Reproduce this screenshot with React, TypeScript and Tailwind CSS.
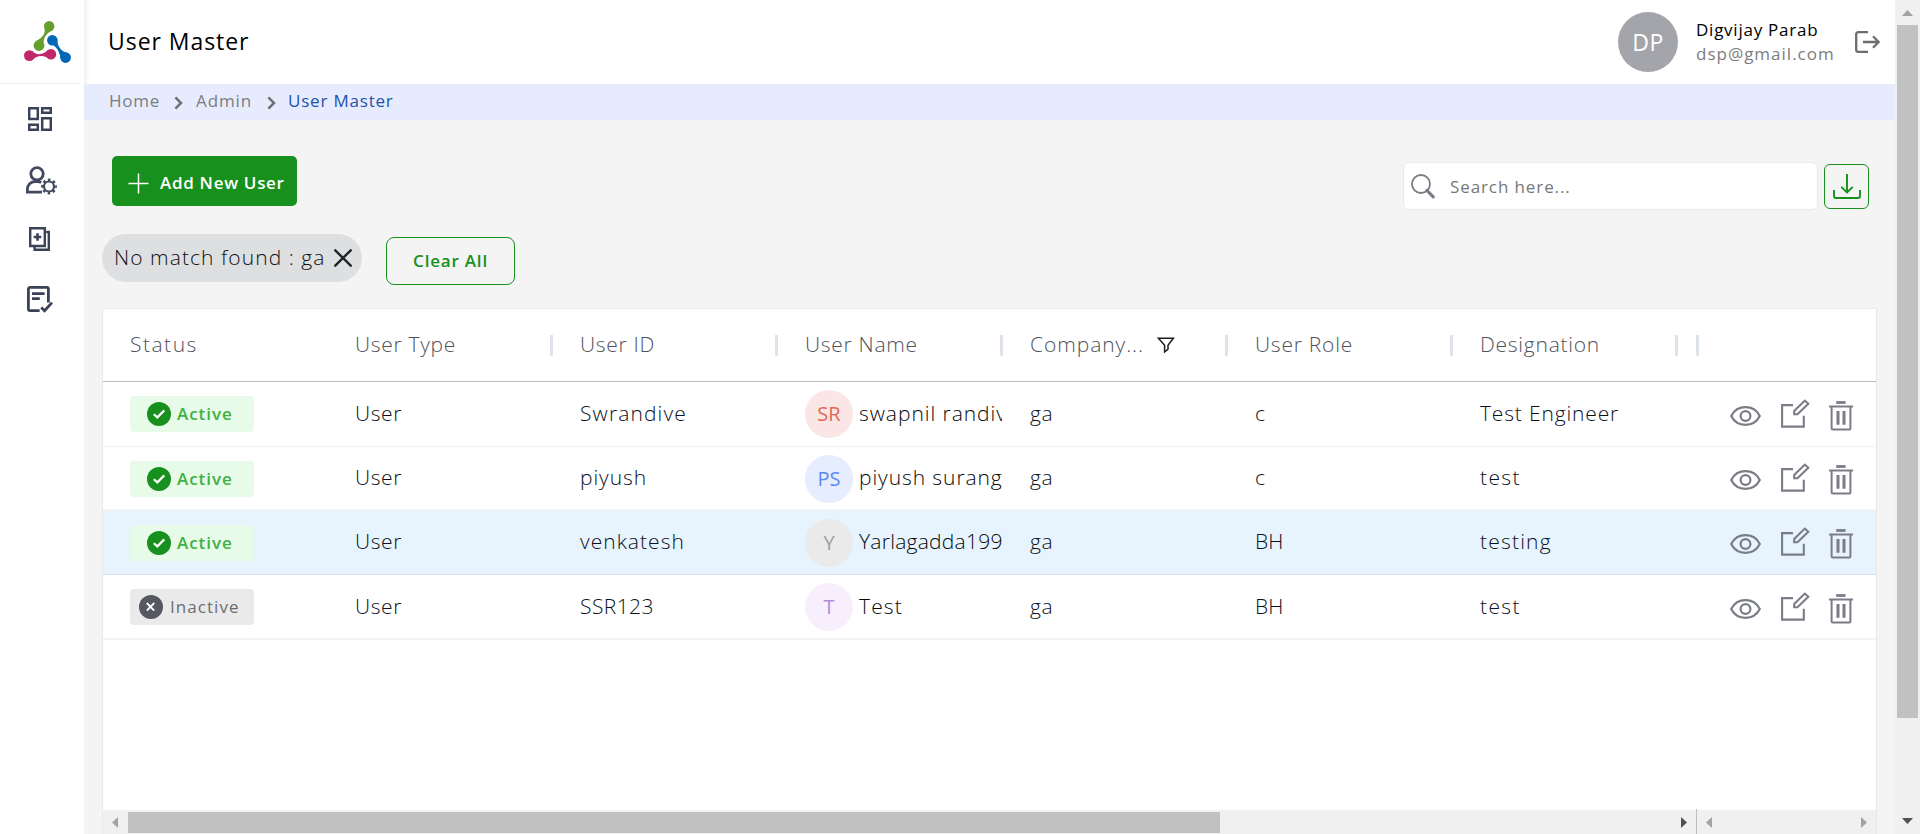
import React from "react";

type Row = {
  active: boolean;
  id: string;
  idLs: string;
  initials: string;
  avatar: string;
  name: string;
  nameLs: string;
  role: string;
  designation: string;
  desLs: string;
  line: string;
};

const rows: Row[] = [
  { active: true, id: "Swrandive", idLs: "tracking-[1.13px]", initials: "SR", avatar: "bg-[#fae7e5] text-[#e56656]", name: "swapnil randive", nameLs: "tracking-[0.95px]", role: "c", designation: "Test Engineer", desLs: "tracking-[0.84px]", line: "h-[65px] border-b border-[#f1f1f2]" },
  { active: true, id: "piyush", idLs: "tracking-[0.93px]", initials: "PS", avatar: "bg-[#e6edfe] text-[#5c88f5]", name: "piyush surang", nameLs: "tracking-[0.92px]", role: "c", designation: "test", desLs: "tracking-[1.4px]", line: "h-16 border-b-2 border-[#f3f3f3] pt-px" },
  { active: true, id: "venkatesh", idLs: "tracking-[1.03px]", initials: "Y", avatar: "bg-[#eaeaea] text-[#9b9da3]", name: "Yarlagadda199", nameLs: "tracking-[0.25px]", role: "BH", designation: "testing", desLs: "tracking-[1.2px]", line: "h-16 border-b border-[#d5dfe9] bg-[#e7f4fe]" },
  { active: false, id: "SSR123", idLs: "tracking-[0.43px]", initials: "T", avatar: "bg-[#f7effe] text-[#b48bd6]", name: "Test", nameLs: "tracking-[1.15px]", role: "BH", designation: "test", desLs: "tracking-[1.4px]", line: "h-[65px] border-b-2 border-[#f3f3f3] pt-px" },
];

const headers: { label: string; ls: string; bar?: boolean; filter?: boolean }[] = [
  { label: "Status", ls: "tracking-[1.5px]" },
  { label: "User Type", ls: "tracking-[0.7px]", bar: true },
  { label: "User ID", ls: "tracking-[0.7px]", bar: true },
  { label: "User Name", ls: "tracking-[0.7px]", bar: true },
  { label: "Company...", ls: "tracking-[0.94px]", bar: true, filter: true },
  { label: "User Role", ls: "tracking-[0.76px]", bar: true },
  { label: "Designation", ls: "tracking-[0.74px]", bar: true },
];

function Logo() {
  return (
    <svg width="47" height="43" viewBox="0 0 47 43">
      <g fill="#65a02f">
        <circle cx="25.2" cy="5.2" r="5.2" />
        <circle cx="15" cy="24.5" r="5.4" />
        <path d="M20.3 7 C21.8 12 19.5 16 11.5 20.5 L19.8 27 C18.4 18 21.5 12.5 28.5 9.2Z" />
      </g>
      <g fill="#0367b6">
        <circle cx="28.3" cy="19.2" r="5.2" />
        <circle cx="41.6" cy="36.6" r="5.3" />
        <path d="M24.5 22.8 C30.5 23.5 35.5 28.5 36.5 37.5 L44.5 32.2 C37.5 31 33.2 26 33.2 17.5Z" />
      </g>
      <g fill="#c0286b">
        <circle cx="5.4" cy="34.6" r="5.4" />
        <circle cx="27" cy="33.2" r="5.2" />
        <path d="M8 30 C12.5 34.6 19 34.2 24.5 28.6 L25 38 C20 33.8 13.5 34 7.5 39.6Z" />
      </g>
    </svg>
  );
}

function DashboardIcon() {
  return (
    <svg width="24" height="24" viewBox="0 0 24 24" fill="none" stroke="#3a4257" strokeWidth="2.5">
      <path d="M1.2 1.2h8.6v10.8H1.2zM14.2 1.2h8.6v4.6h-8.6zM14.2 11.2h8.6v11.6h-8.6zM1.2 17.8h8.6v5H1.2z" />
    </svg>
  );
}

function UserGearIcon() {
  return (
    <svg width="31" height="29" viewBox="0 0 31 29" fill="none" stroke="#414a60" strokeWidth="2.8">
      <circle cx="11" cy="7.8" r="6.2" />
      <path d="M16 26.1H1.4V23.5C1.4 18.5 4.8 15.7 9 15.7H11.5C13 15.7 14.2 16 15.2 16.6" />
      <circle cx="23" cy="20.5" r="5" strokeWidth="2.2" />
      <circle cx="23" cy="20.5" r="6.7" strokeWidth="2.4" strokeDasharray="2.6 2.662" strokeDashoffset="1.3" />
    </svg>
  );
}

function CopyIcon() {
  return (
    <svg width="21" height="24" viewBox="0 0 21 24" fill="none" stroke="#3a4257" strokeWidth="2.4">
      <path d="M1.2 1.2h14.6v17.8H1.2z" />
      <path d="M17.2 5h2.6v17.8H5.6v-3" />
      <path d="M8.5 6.2v7.6M4.7 10h7.6" strokeWidth="2.6" />
    </svg>
  );
}

function NoteIcon() {
  return (
    <svg width="26" height="27" viewBox="0 0 26 27" fill="none" stroke="#3a4257" strokeWidth="2.8">
      <path d="M12.6 24.7H3a1.6 1.6 0 0 1-1.6-1.6V3a1.6 1.6 0 0 1 1.6-1.6h16.8a1.6 1.6 0 0 1 1.6 1.6v13.6" />
      <path d="M5 7.6h12.6M5 12.6h7.8M14.2 21.4l3.4 3.4 7.4-8.2" />
    </svg>
  );
}

function Chevron() {
  return (
    <svg width="9" height="14" viewBox="0 0 9 14" fill="none" stroke="#6f7073" strokeWidth="2.5">
      <path d="M1.4 1.4l5.6 5.6-5.6 5.6" />
    </svg>
  );
}

function Actions() {
  return (
    <div className="flex items-start gap-5 text-[#7a7d86]">
      <svg className="mt-[7px]" width="31" height="20" viewBox="0 0 31 20" fill="none" stroke="currentColor" strokeWidth="2.2">
        <path d="M1.2 10C4 4.6 9.2 1.2 15.5 1.2S27 4.6 29.8 10C27 15.4 21.8 18.8 15.5 18.8S4 15.4 1.2 10Z" />
        <circle cx="15.5" cy="10" r="4.9" />
      </svg>
      <svg width="29" height="29" viewBox="0 0 29 29" fill="none" stroke="currentColor" strokeWidth="2.1">
        <path d="M12 6.1H1.1V27.6H22.8V16.8" />
        <path d="M13.2 15.2V11.9L23.8 1.6L27.3 4.8L16.5 15.2Z" />
      </svg>
      <svg className="-ml-[1px] mt-0.5" width="24" height="30" viewBox="0 0 24 30" fill="none" stroke="currentColor" strokeWidth="2">
        <path d="M7.2 1.5H16.6" strokeWidth="2.8" />
        <path d="M0 5.5H24" />
        <path d="M2.6 5.5V27.2a1.4 1.4 0 0 0 1.4 1.4H20a1.4 1.4 0 0 0 1.4-1.4V5.5" />
        <path d="M9 10V23.8M15 10V23.8" strokeWidth="3" />
      </svg>
    </div>
  );
}

function StatusBadge({ active }: { active: boolean }) {
  return active ? (
    <div className="flex h-9 w-[124px] items-center gap-1.5 rounded bg-[#e8fae8] pl-[17px]">
      <svg width="24" height="24" viewBox="0 0 24 24">
        <circle cx="12" cy="12" r="12" fill="#18901d" />
        <path d="M6.8 12.2l3.5 3.2 7-7" fill="none" stroke="#fff" strokeWidth="2.2" />
      </svg>
      <span className="text-[17px] font-semibold tracking-[0.95px] text-[#3fb144]">Active</span>
    </div>
  ) : (
    <div className="flex h-9 w-[124px] items-center gap-[7px] rounded bg-[#eaeaea] pl-[9px]">
      <svg width="24" height="24" viewBox="0 0 24 24">
        <circle cx="12" cy="12" r="12" fill="#555861" />
        <path d="M7.8 8l7.4 7.6M15.2 8l-7.4 7.6" stroke="#fff" strokeWidth="1.8" />
      </svg>
      <span className="text-[17px] font-medium tracking-[1.05px] text-[#6b6d75]">Inactive</span>
    </div>
  );
}

function Arrow({ dir, className }: { dir: "up" | "down" | "left" | "right"; className: string }) {
  const vertical = dir === "up" || dir === "down";
  const points = { up: "0,6 11,6 5.5,0", down: "0,0 11,0 5.5,6", left: "6,0 6,11 0,5.5", right: "0,0 0,11 6,5.5" }[dir];
  return (
    <svg className={className} width={vertical ? 11 : 6} height={vertical ? 6 : 11} fill="currentColor">
      <polygon points={points} />
    </svg>
  );
}

function Table() {
  return (
    <section className="ml-[18px] mt-[23px] flex w-[1775px] flex-1 flex-col border border-b-0 border-[#e9e9ea] bg-white">
      <div className="flex h-[73px] shrink-0 items-center border-b border-[#b9bcc5] text-[21px] font-light text-[#4f525c]">
        {headers.map((h) => (
          <div key={h.label} className="flex w-[225px] items-center justify-between pl-[27px]">
            <div className="flex items-center gap-[13px]">
              <span className={h.ls}>{h.label}</span>
              {h.filter && (
                <svg width="18" height="17" viewBox="0 0 18 17" fill="none" stroke="#181d1f" strokeWidth="1.5">
                  <path d="M1.4 1.2H16.4L11 8.2V12.2L7.6 15V8.2Z" />
                </svg>
              )}
            </div>
            {h.bar && <div className="h-[21px] w-[3px] bg-[#dde2eb]" />}
          </div>
        ))}
        <div className="ml-[18px] h-[21px] w-[3px] bg-[#dde2eb]" />
      </div>
      {rows.map((r) => (
        <div key={r.id} className={`flex shrink-0 items-center text-[21px] font-light text-[#0b1022] ${r.line}`}>
          <div className="w-[225px] pl-[27px]"><StatusBadge active={r.active} /></div>
          <div className="w-[225px] pb-px pl-[27px] tracking-[0.6px]">User</div>
          <div className={`w-[225px] pb-px pl-[27px] ${r.idLs}`}>{r.id}</div>
          <div className="w-[225px] pl-[27px]">
            <div className="flex w-[197px] items-center gap-1.5 overflow-hidden">
              <div className={`flex size-12 shrink-0 items-center justify-center rounded-full text-xl font-normal ${r.avatar}`}>{r.initials}</div>
              <span className={`whitespace-nowrap pb-px text-[#080808] ${r.nameLs}`}>{r.name}</span>
            </div>
          </div>
          <div className="w-[225px] pb-px pl-[27px] tracking-[0.6px]">ga</div>
          <div className="w-[225px] pb-px pl-[27px]">{r.role}</div>
          <div className={`w-[225px] pb-px pl-[27px] ${r.desLs}`}>{r.designation}</div>
          <div className="pl-[52px] pt-px"><Actions /></div>
        </div>
      ))}
      <div className="mt-auto flex h-6 shrink-0 items-center bg-[#f0f0f0]">
        <Arrow dir="left" className="ml-[9px] text-[#a3a3a3]" />
        <div className="ml-[10px] h-[21px] w-[1092px] bg-[#c1c1c1]" />
        <Arrow dir="right" className="ml-[461px] text-[#505050]" />
        <div className="-mt-px ml-[9px] h-[25px] w-px bg-[#babfc7]" />
        <Arrow dir="left" className="ml-[9px] text-[#a3a3a3]" />
        <Arrow dir="right" className="ml-[149px] text-[#a3a3a3]" />
      </div>
    </section>
  );
}

export default function App() {
  return (
    <div className="flex h-[834px] w-[1920px] overflow-hidden bg-[#f4f4f4] font-['Open_Sans',sans-serif]">
      <aside className="flex w-[84px] shrink-0 flex-col bg-white">
        <div className="h-[84px] w-20 border-b border-[#ededee] pl-6 pt-[21px]"><Logo /></div>
        <div className="ml-7 mt-[23px] h-6"><DashboardIcon /></div>
        <div className="ml-[26px] mt-[35px] h-[29px]"><UserGearIcon /></div>
        <div className="ml-[29px] mt-[32px] h-6"><CopyIcon /></div>
        <div className="ml-[27px] mt-[35px] h-[27px]"><NoteIcon /></div>
      </aside>

      <main className="flex w-[1811px] shrink-0 flex-col">
        <header className="flex h-[84px] shrink-0 items-center bg-white bg-linear-to-r from-[#f1f1f1] to-white to-[6px]">
          <h1 className="pb-0.5 pl-6 text-[23px] font-medium tracking-[0.95px] text-black">User Master</h1>
          <div className="ml-auto flex size-[60px] items-center justify-center rounded-full bg-[#a4a5ab] text-[23px] tracking-[0.5px] text-white">DP</div>
          <div className="ml-[18px] w-[143px] text-[17px] leading-6">
            <div className="tracking-[0.75px] text-black">Digvijay Parab</div>
            <div className="tracking-[1px] text-[#7d7d7e]">dsp@gmail.com</div>
          </div>
          <svg className="ml-[16px] mr-[15px]" width="25" height="22" viewBox="0 0 25 22" fill="none" stroke="#6d6d6e" strokeWidth="2.3">
            <path d="M13 1.2H3.2a2 2 0 0 0-2 2V18.8a2 2 0 0 0 2 2H13M8 11H23.5M18 5.2L23.6 11L18 16.8" />
          </svg>
        </header>

        <nav className="flex h-9 shrink-0 items-center bg-[#e6ecfd] pb-[2px] pl-[25px] text-[17px] text-[#7c7d80]">
          <span className="w-[65px] tracking-[0.75px]">Home</span>
          <span className="w-[22px] pt-1"><Chevron /></span>
          <span className="w-[71px] tracking-[0.9px]">Admin</span>
          <span className="w-[21px] pt-1"><Chevron /></span>
          <span className="tracking-[0.8px] text-[#2350ad]">User Master</span>
        </nav>

        <div className="flex h-[90px] shrink-0 items-start pl-7 pt-9">
          <button className="flex h-[50px] w-[185px] items-center rounded-[5px] bg-[#18901d] pl-4 pt-1 text-white">
            <svg width="21" height="21" viewBox="0 0 21 21" stroke="#fff" strokeWidth="1.5">
              <path d="M10.5 .5v20M.5 10.5h20" />
            </svg>
            <span className="whitespace-nowrap pl-[11px] text-[17px] font-semibold tracking-[0.7px]">Add New User</span>
          </button>
          <div className="ml-[1106px] mt-1.5 flex h-12 w-[415px] shrink-0 items-center rounded-md border border-[#e9eaeb] bg-white pl-[7px]">
            <svg width="24" height="25" viewBox="0 0 24 25" fill="none" stroke="#7a7d86">
              <circle cx="10" cy="10" r="9" strokeWidth="1.8" />
              <path d="M16 16.5l6.2 6.3" strokeWidth="3.2" strokeLinecap="round" />
            </svg>
            <span className="pl-[15px] pt-0.5 text-[17px] tracking-[0.9px] text-[#76777a]">Search here...</span>
          </div>
          <button className="ml-1.5 mt-2 flex h-[45px] w-[45px] shrink-0 items-center justify-center rounded-md border border-[#18901d]">
            <svg width="28" height="25" viewBox="0 0 28 25" fill="none" stroke="#18901d" strokeWidth="1.9">
              <path d="M14 0V18.5M8.3 12.8l5.7 5.7 5.7-5.7M1 16v6a2 2 0 0 0 2 2H25a2 2 0 0 0 2-2V16" />
            </svg>
          </button>
        </div>

        <div className="flex h-[75px] shrink-0 pl-[18px] pt-6">
          <div className="flex h-12 w-[260px] items-center gap-2 rounded-full bg-[#dedfe1] pl-3">
            <span className="w-[212px] whitespace-nowrap text-[21px] font-light tracking-[1.06px] text-[#101114]">No match found : ga</span>
            <svg className="shrink-0" width="18" height="18" viewBox="0 0 17 17" stroke="#212529" strokeWidth="2.3" strokeLinecap="round">
              <path d="M1.2 1.2l14.6 14.6M15.8 1.2L1.2 15.8" />
            </svg>
          </div>
          <button className="ml-6 mt-[3px] flex h-12 w-[129px] items-center justify-center rounded-lg border border-[#18901d] text-[17px] font-semibold tracking-[0.8px] text-[#18901d]">Clear All</button>
        </div>

        <Table />
      </main>

      <div className="flex w-[25px] shrink-0 flex-col items-center bg-[#f0f0f0]">
        <Arrow dir="up" className="mt-[10px] text-[#a3a3a3]" />
        <div className="mt-[9px] h-[693px] w-[21px] bg-[#c1c1c1]" />
        <Arrow dir="down" className="mt-[100px] text-[#505050]" />
      </div>
    </div>
  );
}
